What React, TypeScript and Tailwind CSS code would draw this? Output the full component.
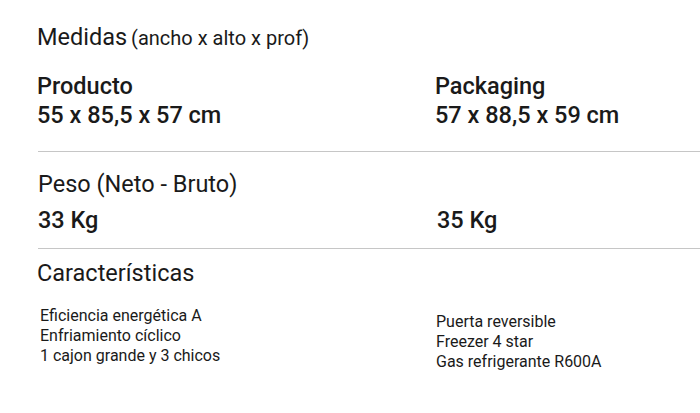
import React from "react";

export default function App() {
  return (
    <div className="w-[700px] h-[413px] overflow-hidden bg-white font-['Roboto',sans-serif] text-[#1a1a1a]">
      <div className="pl-[37px] pt-[24px]">
        <div className="leading-[26px]">
          <span className="text-[23.5px]">Medidas</span>{" "}
          <span className="text-[20px]">(ancho x alto x prof)</span>
        </div>
        <div className="mt-[19px] flex text-[23.5px] font-medium leading-[29px]">
          <div className="w-[398px]">
            <div>Producto</div>
            <div>55 x 85,5 x 57 cm</div>
          </div>
          <div>
            <div>Packaging</div>
            <div>57 x 88,5 x 59 cm</div>
          </div>
        </div>
        <div className="ml-px mt-[21px] h-px bg-[#c6c6c6]" />
        <div className="pl-px mt-[19px] text-[23.5px] leading-[26px]">Peso (Neto - Bruto)</div>
        <div className="mt-[10px] flex text-[23.5px] font-medium leading-[26px]">
          <div className="w-[398px] pl-px">33 Kg</div>
          <div className="pl-[2px]">35 Kg</div>
        </div>
        <div className="ml-px mt-[15px] h-px bg-[#c6c6c6]" />
        <div className="mt-[11px] text-[23.5px] leading-[26px]">Características</div>
        <div className="mt-[20px] flex text-[16px] leading-[20px]">
          <div className="w-[398px] pl-[3px]">
            <div>Eficiencia energética A</div>
            <div>Enfriamiento cíclico</div>
            <div>1 cajon grande y 3 chicos</div>
          </div>
          <div className="mt-[6px] pl-px">
            <div>Puerta reversible</div>
            <div>Freezer 4 star</div>
            <div>Gas refrigerante R600A</div>
          </div>
        </div>
      </div>
    </div>
  );
}
